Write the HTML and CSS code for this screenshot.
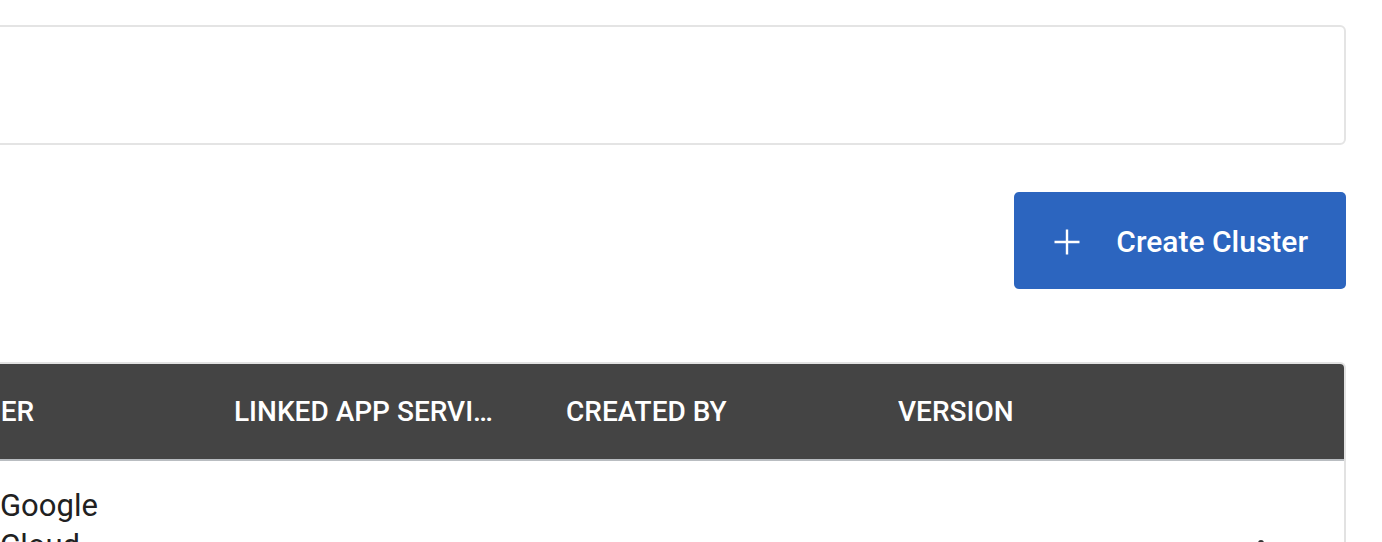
FILE: index.html
```html
<!DOCTYPE html>
<html lang="en">
<head>
<meta charset="utf-8">
<title>Clusters</title>
<link rel="stylesheet" href="styles.css">
</head>
<body>
<div class="viewport">
  <div class="page">
    <section class="card"></section>
    <div class="toolbar">
      <button class="btn-primary" type="button">
        <svg class="btn-icon" width="26" height="26" viewBox="0 0 26 26" aria-hidden="true">
          <path d="M13 0.5v25M0.5 13h25" stroke="#fff" stroke-width="2.4" fill="none"/>
        </svg>
        <span>Create Cluster</span>
      </button>
    </div>
    <div class="table">
      <div class="thead">
        <div class="th"></div>
        <div class="th">PROVIDER</div>
        <div class="th">LINKED APP SERVI…</div>
        <div class="th">CREATED BY</div>
        <div class="th">VERSION</div>
        <div class="th"></div>
      </div>
      <div class="tr">
        <div class="td"></div>
        <div class="td provider">
          <span class="logo"></span>
          <span class="provider-name">Google Cloud</span>
        </div>
        <div class="td"></div>
        <div class="td"></div>
        <div class="td"></div>
        <div class="td actions">
          <svg width="10" height="34" viewBox="0 0 10 34" aria-hidden="true">
            <circle cx="5" cy="4" r="3" fill="#333"/>
            <circle cx="5" cy="17" r="3" fill="#333"/>
            <circle cx="5" cy="30" r="3" fill="#333"/>
          </svg>
        </div>
      </div>
    </div>
  </div>
</div>
</body>
</html>
```

FILE: styles.css
```css
* { box-sizing: border-box; }
html, body { margin: 0; padding: 0; background: #fff; }
body { font-family: Roboto, "Liberation Sans", Arial, sans-serif; color: #212121; }

.viewport { width: 100%; height: 542px; overflow: hidden; }

.page {
  margin-left: -200px;
  padding: 25px 36px 0 0;
  display: flex;
  flex-direction: column;
}

.card {
  height: 120px;
  border: 2px solid #e4e4e4;
  border-radius: 6px;
  background: #fff;
}

.toolbar {
  display: flex;
  justify-content: flex-end;
  margin-top: 47px;
}

.btn-primary {
  display: flex;
  align-items: center;
  gap: 36px;
  height: 97px;
  padding: 2px 38px 0 40px;
  border: 0;
  border-radius: 5px;
  background: #2c65bf;
  color: #fff;
  font-family: Roboto, "Liberation Sans", Arial, sans-serif;
  font-size: 30px;
  font-weight: 500;
  cursor: pointer;
}
.btn-icon { display: block; flex: none; }

.table {
  margin-top: 73px;
  border: 2px solid #e2e2e2;
  border-bottom: 0;
  border-radius: 6px 6px 0 0;
  overflow: hidden;
}

.thead, .tr {
  display: grid;
  grid-template-columns: 100px 332px 332px 332px 332px 1fr;
}

.thead {
  height: 97px;
  background: #444444;
  border-bottom: 2px solid #b9bdc1;
}

.th {
  display: flex;
  align-items: center;
  color: #fff;
  font-size: 28px;
  font-weight: 500;
  white-space: nowrap;
  overflow: hidden;
}

.tr { min-height: 90px; }

.td {
  padding-top: 25px;
  font-size: 31px;
  line-height: 40px;
}

.provider {
  display: flex;
  align-items: flex-start;
}
.logo { width: 98px; flex: none; height: 40px; }
.provider-name { width: 110px; }

.actions {
  padding-top: 78px;
  padding-left: 26px;
}
.actions svg { display: block; }
```
